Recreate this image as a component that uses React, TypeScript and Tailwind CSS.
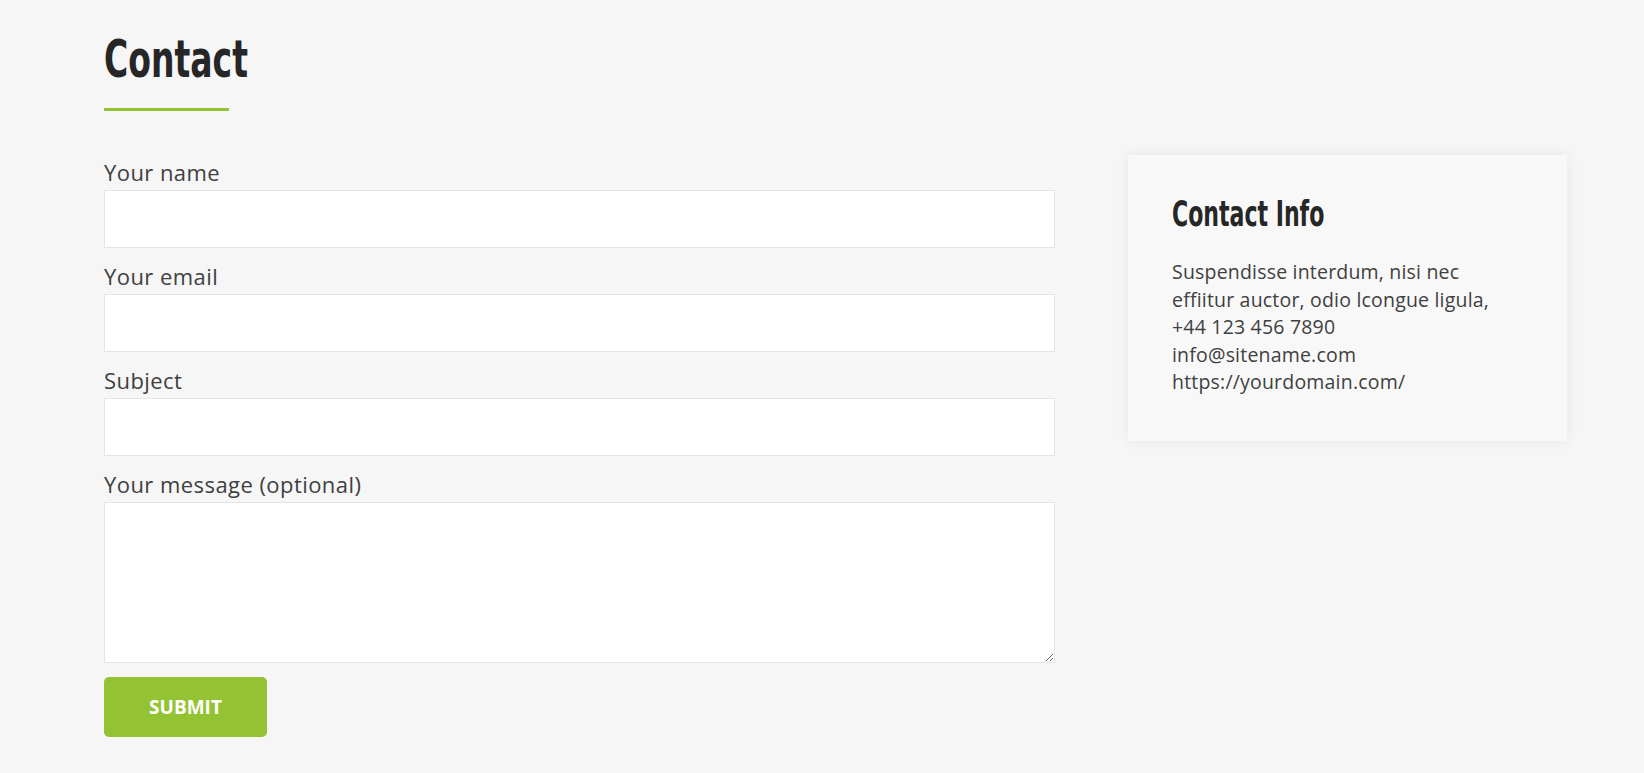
import React, { useState } from "react";

const Field: React.FC<{
  label: string;
  name: string;
  type?: string;
  value: string;
  onChange: (e: React.ChangeEvent<HTMLInputElement | HTMLTextAreaElement>) => void;
  multiline?: boolean;
  first?: boolean;
}> = ({ label, name, type = "text", value, onChange, multiline, first }) => (
  <label className={first ? "flex flex-col pt-[2px]" : "flex flex-col pt-[13px]"}>
    <span className="text-[22px] leading-[30px] mb-[3px] text-[#404040] tracking-[0.02em]">
      {label}
    </span>
    {multiline ? (
      <textarea
        name={name}
        value={value}
        onChange={onChange}
        className="block h-[161px] w-full bg-white border border-[#e4e4e4] px-4 py-3 focus:outline-none"
      />
    ) : (
      <input
        type={type}
        name={name}
        value={value}
        onChange={onChange}
        className="block h-[58px] w-full bg-white border border-[#e4e4e4] px-4 focus:outline-none"
      />
    )}
  </label>
);

const App: React.FC = () => {
  const [form, setForm] = useState({ name: "", email: "", subject: "", message: "" });

  const handleChange = (
    event: React.ChangeEvent<HTMLInputElement | HTMLTextAreaElement>
  ) => {
    const { name, value } = event.target;
    setForm((prev) => ({ ...prev, [name]: value }));
  };

  return (
    <main className="min-h-screen bg-[#f6f6f6] pl-[104px] pr-[77px] pt-[34px] font-['Open_Sans',sans-serif] text-[#404040]">
      <h1 className="font-['DejaVu_Sans_Condensed','Liberation_Sans',sans-serif] font-bold text-[51px] leading-[51px] text-[#262626]">
        <span className="inline-block origin-left scale-x-[0.72]">Contact</span>
      </h1>
      <div className="mt-[23px] h-[3px] w-[125px] bg-[#93c332]" />

      <section className="mt-[44px] flex items-start">
        <form
          className="w-[951px] flex flex-col"
          onSubmit={(e) => e.preventDefault()}
        >
          <Field first label="Your name" name="name" value={form.name} onChange={handleChange} />
          <Field label="Your email" name="email" type="email" value={form.email} onChange={handleChange} />
          <Field label="Subject" name="subject" value={form.subject} onChange={handleChange} />
          <Field
            label="Your message (optional)"
            name="message"
            value={form.message}
            onChange={handleChange}
            multiline
          />
          <div className="mt-[14px]">
            <button
              type="submit"
              className="h-[60px] w-[163px] rounded-[5px] bg-[#93c332] text-white font-bold text-[19px] focus:outline-none"
            >
              SUBMIT
            </button>
          </div>
        </form>

        <aside className="ml-[73px] w-[439px] bg-[#f8f8f8] shadow-[0_0_12px_rgba(0,0,0,0.07)] pl-[44px] pr-6 pt-[42px] pb-[45px]">
          <h2 className="font-['DejaVu_Sans_Condensed','Liberation_Sans',sans-serif] font-bold text-[35px] leading-[35px] text-[#262626]">
            <span className="inline-block origin-left scale-x-[0.7] whitespace-nowrap">Contact Info</span>
          </h2>
          <p className="mt-[26px] text-[19.5px] leading-[27.5px] text-[#404040] tracking-[0.01em]">
            Suspendisse interdum, nisi nec
            <br />
            effiitur auctor, odio lcongue ligula,
            <br />
            +44 123 456 7890
            <br />
            info@sitename.com
            <br />
            https://yourdomain.com/
          </p>
        </aside>
      </section>
    </main>
  );
};

export default App;
